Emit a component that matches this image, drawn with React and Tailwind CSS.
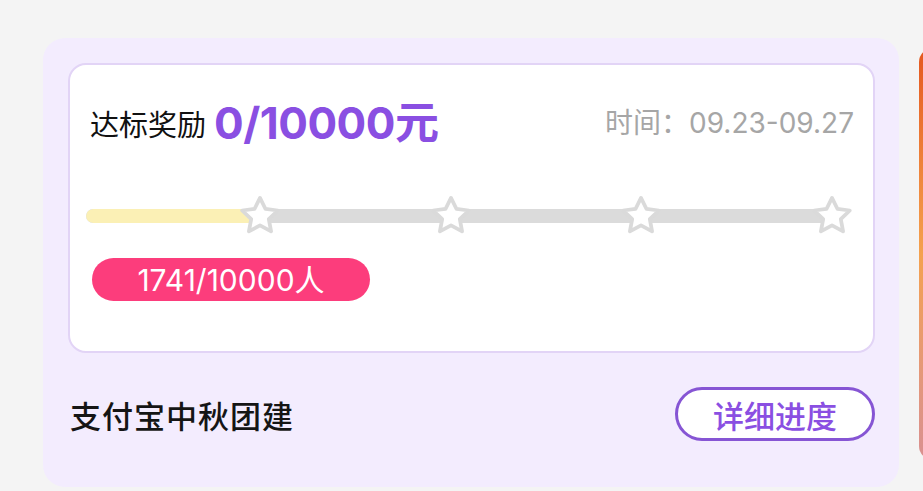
import React from "react";

const Star = () => (
  <svg width="44" height="44" viewBox="0 0 40 40" className="shrink-0 -my-[2px]">
    <path
      d="M20 3.5 L25 13.6 L36.2 15 L28 22.8 L30.1 33.9 L20 28.6 L9.9 33.9 L12 22.8 L3.8 15 L15 13.6 Z"
      fill="#ffffff"
      stroke="#dadada"
      strokeWidth="3.4"
      strokeLinejoin="round"
    />
  </svg>
);

export default function App() {
  const font = { fontFamily: '"Inter", "Noto Sans CJK SC", sans-serif' };
  const cjk = { fontFamily: '"Noto Sans CJK SC", sans-serif' };
  return (
    <div
      className="w-[923px] h-[491px] overflow-hidden bg-[#f4f4f4] flex items-start gap-[20px] pl-[43px] pt-[38px]"
      style={font}
    >
      <div className="shrink-0 w-[856px] h-[449px] rounded-[22px] bg-[#f3ecfe] pt-[25px] pl-[25px] pr-[24px] flex flex-col">
        <div className="h-[290px] rounded-[18px] bg-white border-2 border-[#e2d4f6] flex flex-col pl-[20px] pr-[19px] pt-[33px]">
          <div className="flex items-center justify-between h-[50px]">
            <div className="flex items-center">
              <span className="text-[29px] text-[#111] leading-none" style={cjk}>达标奖励</span>
              <span className="ml-[8px] text-[44px] font-bold text-[#8a4fe2] leading-none tracking-[-0.5px]">0/10000元</span>
            </div>
            <span className="text-[28px] text-[#a6a6a6] leading-none">时间：09.23-09.27</span>
          </div>
          <div className="relative mt-[48px] h-[40px] flex items-center">
            <div className="absolute left-[-4px] right-[18px] top-[13px] h-[14px] rounded-full bg-[#dbdbdb] overflow-hidden">
              <div className="h-full w-[170px] bg-[#fbf0b5] rounded-full" />
            </div>
            <div className="relative flex items-center justify-between w-full pl-[148px] pr-[0px]">
              <Star />
              <Star />
              <Star />
              <Star />
            </div>
          </div>
          <div className="mt-[22px] ml-[2px] w-[278px] h-[43px] rounded-full bg-[#fc3d7c] flex items-center justify-center">
            <span className="text-[30px] text-white leading-none">1741/10000人</span>
          </div>
        </div>
        <div className="flex items-center justify-between flex-1 pl-[2px] pb-[12px]">
          <span className="text-[31px] font-medium text-[#151515] leading-none tracking-[1px]" style={cjk}>支付宝中秋团建</span>
          <button className="w-[200px] h-[54px] rounded-full border-[3px] border-[#8655d4] bg-white flex items-center justify-center">
            <span className="text-[31px] font-medium text-[#8a4fe2] leading-none" style={cjk}>详细进度</span>
          </button>
        </div>
      </div>
      <div className="shrink-0 mt-[10px] w-[200px] h-[412px] rounded-[14px] bg-gradient-to-b from-[#e4561e] via-[#f4a14e] to-[#d99090]" />
    </div>
  );
}
